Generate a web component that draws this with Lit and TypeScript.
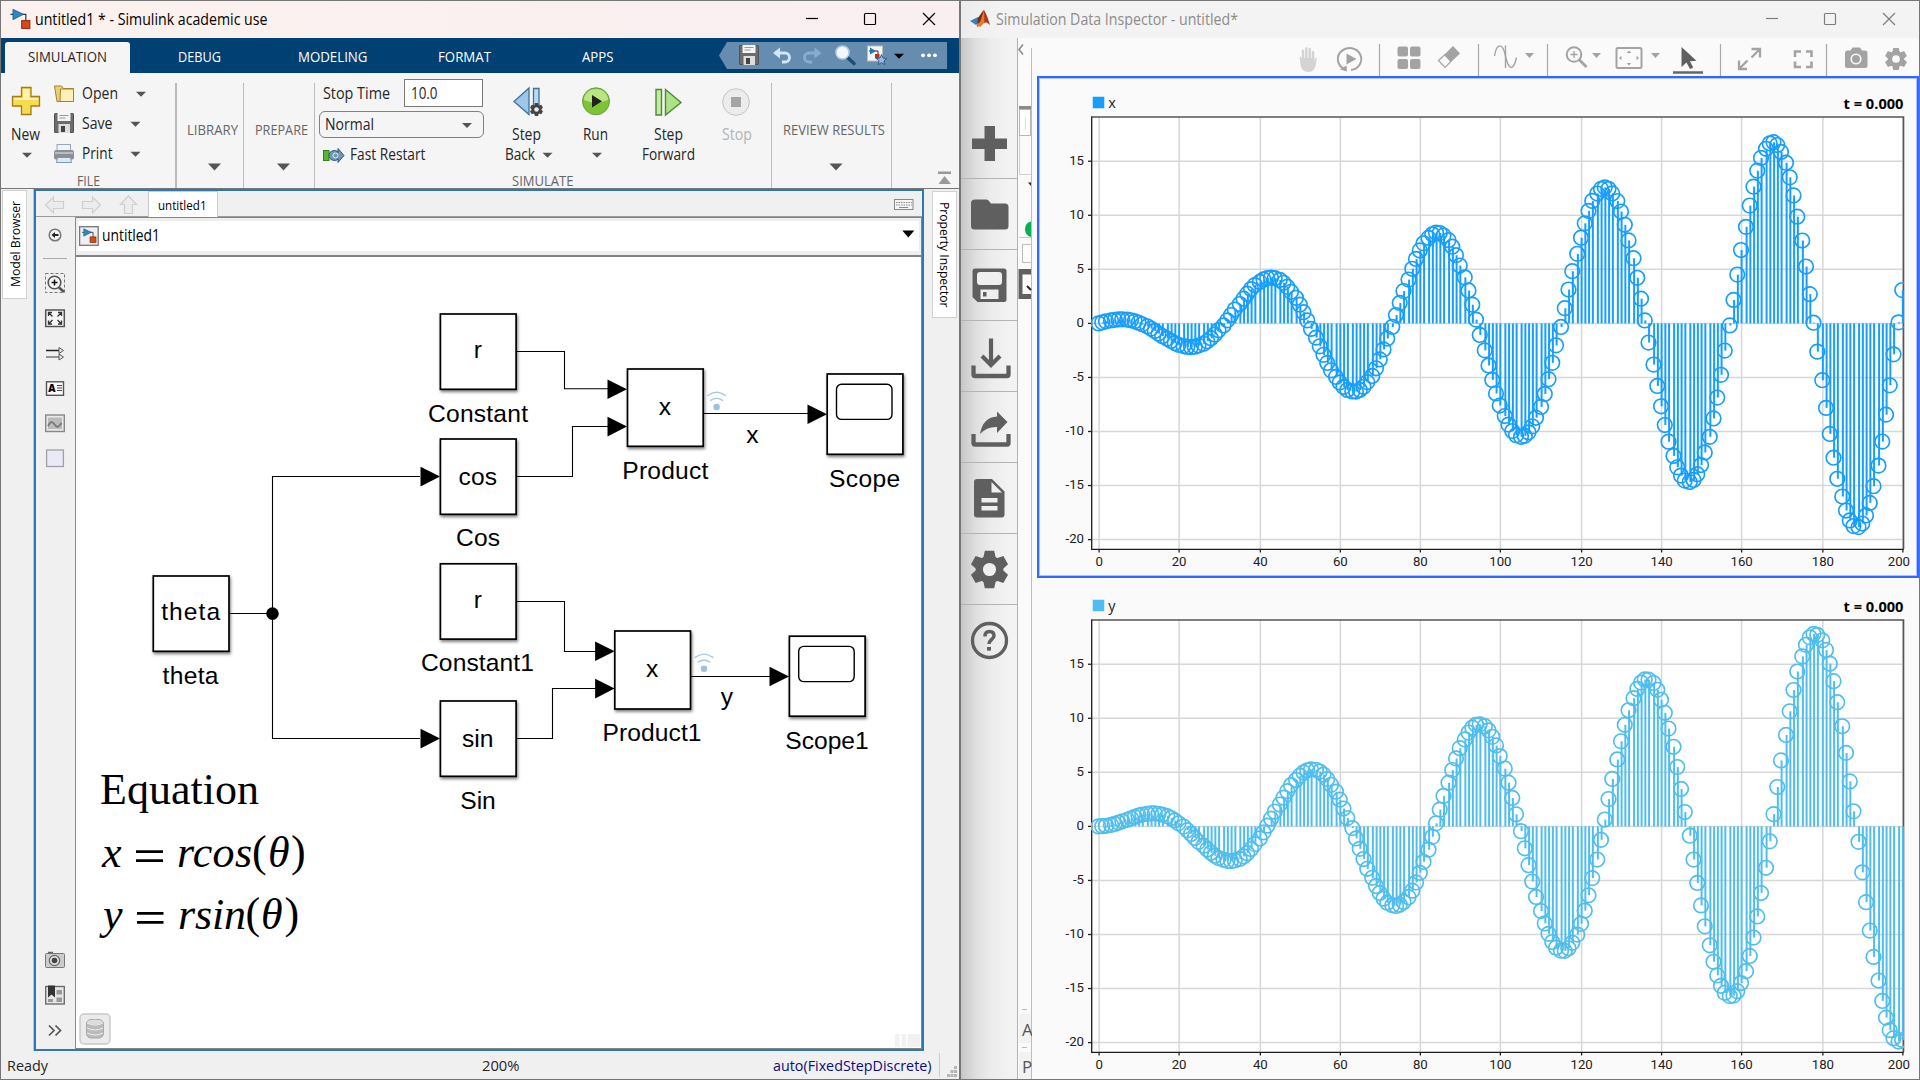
import { LitElement, html, svg, css } from "lit";
import { customElement, property } from "lit/decorators.js";

/* A slice of a bar: its viewBox is expressed in window coordinates so cells tile. */
const cell = (x: number, y: number, w: number, h: number, body: unknown) =>
  html`<svg class="cell" width=${w} height=${h} viewBox="${x} ${y} ${w} ${h}">${body}</svg>`;

/* A one-line label fitted to an exact advance width. */
const label = (text: string, w: number, size = 15.5, cls = "dark") =>
  html`<svg class="lbl ${cls}" width=${w} height="20" viewBox="0 0 ${w} 20"><text
    x="0" y="15" font-size=${size} textLength=${w} lengthAdjust="spacingAndGlyphs">${text}</text></svg>`;

const caret = (cx: number, cy: number, w = 10, h = 5, fill = "#555") =>
  svg`<path d="M${cx - w / 2} ${cy - h / 2}h${w}l${-w / 2} ${h}z" fill=${fill}/>`;

const floppy = (x: number, y: number) => svg`
  <rect x=${x} y=${y} width="20" height="20" rx="1.5" fill="#4d4d4d"/>
  <rect x=${x + 0.8} y=${y + 0.8} width="18.4" height="18.4" rx="1" fill="#6c6c6c"/>
  <rect x=${x + 3.5} y=${y} width="13" height="8" fill="#f4f4f4"/>
  <path d="M${x + 5.5} ${y + 2.5}h9M${x + 5.5} ${y + 5}h6" stroke="#999" stroke-width="1"/>
  <rect x=${x + 4.5} y=${y + 11} width="11.5" height="9" fill="#ddd"/>
  <rect x=${x + 7} y=${y + 13} width="4" height="6" fill="#444"/>`;

const modelGlyph = (x: number, y: number, k: number) => svg`
  <g transform="translate(${x} ${y}) scale(${k})">
    <path d="M0 5.5h15.8v7" fill="none" stroke="#333" stroke-width="1.2"/>
    <path d="M2.5 0.3L13.5 5.5L2.5 11z" fill="#2f86c0" stroke="#17608f" stroke-width=".8"/>
    <rect x="11.5" y="12" width="8.5" height="8" fill="#d9481c" stroke="#8d2708" stroke-width="1"/>
  </g>`;

const gear = (cx: number, cy: number, r: number, fill: string, hole: string) => svg`
  <g transform="translate(${cx} ${cy}) scale(${r / 10})">
    <g fill=${fill}>
      <circle r="7.4"/>
      ${[0, 60, 120, 180, 240, 300].map(a => svg`<path d="M-2.5-10h5l1 4.5h-7z" transform="rotate(${a})"/>`)}
    </g>
    <circle r="3.5" fill=${hole}/>
  </g>`;

const windowButtons = (x: number, color: string) => svg`
  <g fill="none" stroke=${color} stroke-width="1.2">
    <path d="M${x} 18.5h12"/>
    <rect x=${x + 58.5} y="13.5" width="11" height="11" rx="1"/>
    <path d="M${x + 117} 13l12 12m0-12l-12 12"/>
  </g>`;

/* Spiral samples: r grows by 0.1 and theta by 0.15 each step. */
const STEP_R = 0.1;
const STEP_T = 0.15;
const spiral = (fn: (a: number) => number) =>
  Array.from({ length: 201 }, (_, n) => STEP_R * n * fn(STEP_T * n));

@customElement("stem-chart")
class StemChart extends LitElement {
  @property() name = "";
  @property() color = "#169eff";
  @property({ attribute: false }) values: number[] = [];

  static styles = css`
    :host { display: block; height: 500px; overflow: hidden; }
    svg { display: block; }
    text { font-family: Roboto, "Liberation Sans", sans-serif; font-size: 13.2px; fill: #222; }
    .name { font-family: "Open Sans", "Noto Sans", sans-serif; font-size: 14.5px; }
    .time { font-family: "Open Sans", "Noto Sans", sans-serif; font-size: 14.5px; font-weight: 700; fill: #000; }
    .mid { text-anchor: middle; }
    .end { text-anchor: end; }
  `;

  render() {
    const sx = (n: number) => 62.1 + Math.round(n * 3.2144) * 1.25;
    const sy = (v: number) => 247.4 - v * 10.81;
    const yt = [15, 10, 5, 0, -5, -10, -15, -20];
    const xt = [0, 20, 40, 60, 80, 100, 120, 140, 160, 180, 200];
    return html`<svg width="882" height="500" viewBox="0 0 882 500">
      <defs><clipPath id="plot"><rect x="54" y="41" width="813" height="432"/></clipPath></defs>
      <rect x="56" y="21" width="11" height="11" fill=${this.color} stroke=${this.color} stroke-opacity=".5"/>
      <text class="name" x="71.3" y="31.7">${this.name}</text>
      <text class="time" x="806.5" y="33.3" textLength="60" lengthAdjust="spacingAndGlyphs">t = 0.000</text>
      <rect x="55" y="41" width="812" height="432.5" fill="#fff"/>
      <g stroke="#d6d8d8" stroke-width="1.5">
        ${yt.map(v => svg`<path d="M55 ${sy(v)}h812"/>`)}
        ${xt.map(n => svg`<path d="M${sx(n)} 41v432"/>`)}
      </g>
      <path d="M54.5 41h812v432" fill="none" stroke="#555" stroke-width="1.6"/>
      <path d="M54.7 40.5v432.8h812" fill="none" stroke="#1c1c1c" stroke-width="1.3"/>
      <g stroke="#222" stroke-width="1.3">
        ${yt.map(v => svg`<path d="M51 ${sy(v)}h4"/>`)}
        ${xt.map(n => svg`<path d="M${sx(n)} 473v3.5"/>`)}
      </g>
      <g clip-path="url(#plot)" fill="none" stroke=${this.color} stroke-width="1.65">
        ${this.values.map((v, n) => svg`<path stroke-width="2" d="M${sx(n)} ${sy(0)}V${sy(v)}"/><circle
          cx=${sx(n) - 0.6} cy=${sy(v)} r="7.3"/>`)}
      </g>
      ${yt.map(v => svg`<text class="end" x="47" y=${sy(v) + 3.8}>${v}</text>`)}
      ${xt.map(n => svg`<text class="mid" x=${n === 200 ? sx(n) - 4 : sx(n)} y="489.7">${n}</text>`)}
    </svg>`;
  }
}

interface Block { x: number; y: number; w: number; h: number; text?: string; tw?: number; ty?: number; name: string; nx: number; ny: number; nw: number; scope?: boolean }

@customElement("block-diagram")
class BlockDiagram extends LitElement {
  static styles = css`
    :host { display: block; flex: 1; min-height: 0; overflow: hidden; background: #fff; }
    svg { display: block; }
    text { font-family: "Liberation Sans", Arial, sans-serif; font-size: 24.6px; fill: #000; text-anchor: middle; }
    .math text, text.math { font-family: "Liberation Serif", "Times New Roman", serif; font-size: 44px; text-anchor: start; }
    .it { font-style: italic; }
    .block { fill: #fff; stroke: #000; stroke-width: 1.7; filter: drop-shadow(1.5px 2px 1.5px rgba(0, 0, 0, .5)); }
  `;

  blocks: Block[] = [
    { x: 153.3, y: 576, w: 75.7, h: 75.3, text: "theta", tw: 59, ty: 620, name: "theta", nx: 190.5, ny: 684, nw: 56 },
    { x: 440.4, y: 314, w: 75.7, h: 75.3, text: "r", tw: 8.5, ty: 357.6, name: "Constant", nx: 478, ny: 422, nw: 100 },
    { x: 440.4, y: 439, w: 75.7, h: 75.3, text: "cos", tw: 38.5, ty: 484.6, name: "Cos", nx: 478, ny: 545.5, nw: 44 },
    { x: 440.4, y: 563.8, w: 75.7, h: 75.3, text: "r", tw: 8.5, ty: 607.6, name: "Constant1", nx: 477.5, ny: 671, nw: 113 },
    { x: 440.4, y: 701, w: 75.7, h: 75.3, text: "sin", tw: 31.5, ty: 746.7, name: "Sin", nx: 478, ny: 808.7, nw: 35.5 },
    { x: 627.5, y: 369, w: 75.7, h: 77.3, text: "x", tw: 12.5, ty: 414.7, name: "Product", nx: 665.3, ny: 479.3, nw: 86 },
    { x: 614.8, y: 631, w: 75.7, h: 78, text: "x", tw: 12.5, ty: 676.6, name: "Product1", nx: 652, ny: 741, nw: 99 },
    { x: 827.2, y: 374, w: 75.7, h: 80.3, name: "Scope", nx: 864.6, ny: 486.7, nw: 71, scope: true },
    { x: 789.4, y: 636.2, w: 75.7, h: 80, name: "Scope1", nx: 827, ny: 748.7, nw: 83.5, scope: true },
  ];
  wires = [
    "M229 613.5H272.5M420 476.5H272.5V738.5H420",
    "M516 351.5H564.5V388.7H610",
    "M516 476.5H572.5V426.5H610",
    "M703 413.5H810",
    "M516 601.5H564.5V651.5H598",
    "M516 738.5H552.5V688.5H598",
    "M690 676.5H772",
  ];
  tips: [number, number][] = [[440, 476.6], [440, 738.6], [627, 389.2], [627, 426.6], [827, 414.2], [614.6, 651.2], [614.6, 688.6], [789, 676.5]];
  logged: [number, number][] = [[716.6, 407], [704, 668.8]];

  render() {
    return html`<svg width="845" height="791" viewBox="76 257 845 791">
      <g fill="none" stroke="#000" stroke-width="1.1">${this.wires.map(d => svg`<path d=${d}/>`)}</g>
      ${this.tips.map(([x, y]) => svg`<path d="M${x} ${y}l-19.5-9.8v19.6z"/>`)}
      <circle cx="272.5" cy="613.6" r="6.3"/>
      ${this.blocks.map(b => svg`
        <rect class="block" x=${b.x} y=${b.y} width=${b.w} height=${b.h}/>
        ${b.scope ? svg`<rect x=${b.x + 9.3} y=${b.y + 10.2} width="55.5" height="35.2" rx="5" fill="#fff" stroke="#000" stroke-width="1.4"/>` : ""}
        ${b.text ? svg`<text x=${b.x + b.w / 2 - 0.5} y=${b.ty!} textLength=${b.tw!}>${b.text}</text>` : ""}
        <text x=${b.nx} y=${b.ny} textLength=${b.nw}>${b.name}</text>`)}
      <text x="752.5" y="442.7">x</text>
      <text x="727" y="705">y</text>
      ${this.logged.map(([x, y]) => svg`
        <circle cx=${x} cy=${y} r="3.2" fill="#9dc1e2"/>
        <path d="M${x - 6.5} ${y - 6.3}q6.5-4.6 13 0M${x - 9.3} ${y - 11.2}q9.3-7 18.6 0" fill="none" stroke="#a6c6e4" stroke-width="1.4"/>`)}
      <text class="math" x="100" y="804" textLength="159">Equation</text>
      <g class="math">
        <text class="it" x="102" y="867" textLength="20">x</text>
        <path d="M136 851.6h27M136 860.6h27M137 913.4h26.5M137 922.4h26.5" stroke="#000" stroke-width="2.7"/>
        <text class="it" x="177" y="867" textLength="75">rcos</text>
        <text x="252" y="866">(</text><text class="it" x="268" y="867" textLength="22">θ</text><text x="291" y="866">)</text>
        <text class="it" x="103" y="929" textLength="20">y</text>
        <text class="it" x="178" y="929" textLength="68">rsin</text>
        <text x="245.5" y="928">(</text><text class="it" x="261" y="929" textLength="22">θ</text><text x="284.5" y="928">)</text>
      </g>
      <rect x="80" y="1014" width="30" height="30" rx="4" fill="#ebebeb" stroke="#c8c8c8" stroke-width="1.4"/>
      <rect x="86.5" y="1019.5" width="17" height="18.5" rx="4.5" fill="#bbb" stroke="#aaa"/>
      <path d="M87 1023q8.5 4 16 0M87 1028q8.5 4 16 0M87 1033q8.5 4 16 0" fill="none" stroke="#efefef" stroke-width="1"/>
      <ellipse cx="95" cy="1022" rx="7.5" ry="2.3" fill="#ddd"/>
      <path d="M895 1034h4.5v13h-4.5zM901.5 1034h4.5v13h-4.5zM907.5 1034h12.5v13h-12.5z" fill="#f1f1f1"/>
    </svg>`;
  }
}

@customElement("model-window")
class ModelWindow extends LitElement {
  static styles = css`
    :host { display: flex; flex-direction: column; width: 961px; height: 1080px; box-sizing: border-box;
      border: solid #767676; border-width: 1px 2px 1px 1px; background: #f0f0f0; overflow: hidden; }
    svg { display: block; flex: none; }
    text { font-family: "Open Sans", "Noto Sans", sans-serif; }
    .dark { fill: #262626; } .black { fill: #000; } .mute { fill: #666; } .dis { fill: #b3b3b3; }
    .white { fill: #fff; } .navy { fill: #0b0b80; }
    .lbl { overflow: visible; }
    .title { display: flex; align-items: center; height: 37px; background: linear-gradient(90deg, #fbf1ee, #f9eff1); flex: none; }
    .title .grow { flex: 1; }
    .tabs { display: flex; height: 35px; flex: none; background: #004073; padding-left: 4px; }
    .tab { width: 132.5px; height: 31px; margin-top: 4px; display: flex; justify-content: center; align-items: center; box-sizing: border-box; padding-bottom: 2px; }
    .tab.on { width: 125px; margin-right: 3.7px; background: #f5f5f5; border-radius: 3px 3px 0 0; }
    .tabs .grow { flex: 1; }
    .quick { display: flex; height: 27px; width: 228px; margin: 4px 12px 0 0; background: #668db0;
      clip-path: polygon(0 50%, 8px 0, 100% 0, 100% 100%, 8px 100%); }
    .strip { display: flex; height: 115px; flex: none; background: #f5f5f5; border-bottom: 1px solid #777; }
    .sec { display: flex; flex-direction: column; height: 115px; }
    .bar { width: 1px; margin-top: 10px; background: #bcbcbc; flex: none; }
    .bar.two { width: 2px; }
    .cols { display: flex; height: 98px; }
    .cap { display: flex; justify-content: center; height: 17px; }
    .file { width: 174px; } .sim { width: 456px; }
    .lib { width: 66px; } .prep { width: 70px; } .rev { width: 119px; }
    .fold { align-items: center; padding: 47px 0 0 5px; box-sizing: border-box; }
    .rows { display: flex; flex-direction: column; padding-top: 6px; }
    .row { display: flex; align-items: center; height: 30px; }
    .row .lbl { margin-left: 6px; }
    .btn { display: flex; flex-direction: column; align-items: center; }
    .b1 { width: 69px; } .b2 { width: 68px; } .b3 { width: 78px; } .b4 { width: 59px; }
    .newb { width: 51px; }
    .newb .lbl { margin-right: 2px; }
    .back { display: flex; align-items: center; margin-left: 10px; }
    .opts { width: 177px; padding: 6px 0 0 4px; box-sizing: border-box; }
    .opt { display: flex; align-items: center; height: 30px; padding-left: 3.5px; }
    .opt.low { padding-top: 1px; }
    .inp { width: 79.5px; height: 28px; box-sizing: border-box; border: 1px solid #7a7a7a; background: #fff; margin: -2px 0 0 14px; padding: 3.5px 0 0 6.5px; }
    .sel { display: flex; align-items: center; justify-content: space-between; width: 165px; height: 27px; box-sizing: border-box; margin: 2px 0 1px;
      border: 1px solid #808080; border-radius: 6px; padding: 0 4px 0 5px; }
    .opt .fast { margin-left: 3px; }
    .body { display: flex; height: 862px; flex: none; }
    .side { width: 33px; box-sizing: border-box; padding: 1px 0 0 1px; border-right: 1px solid #c0c0c0; flex: none; }
    .vtab { background: #fff; border: 1px solid #d0d0d0; box-sizing: border-box; }
    .side .vtab { width: 25px; height: 109px; }
    .right { width: 34px; padding: 2px 0 0 8px; box-sizing: border-box; flex: none; }
    .right .vtab { width: 25px; height: 127px; }
    .editor { display: flex; flex-direction: column; width: 890px; height: 862px; box-sizing: border-box; border: 2px solid #2f78b0; flex: none; }
    .docs { display: flex; height: 26px; flex: none; border-bottom: 1px solid #9a9a9a; box-sizing: border-box; }
    .doc { display: flex; justify-content: center; align-items: center; width: 70px; height: 26px; background: #fff; border: solid #ccc; border-width: 1px 1px 0; box-sizing: border-box; }
    .docs .grow { flex: 1; }
    .main { display: flex; flex: 1; min-height: 0; }
    .palette { display: flex; flex-direction: column; justify-content: space-between; width: 40px; border-right: 1px solid #8a8a92; box-sizing: border-box; flex: none; }
    .view { display: flex; flex-direction: column; flex: 1; min-width: 0; border: solid #83858c; border-width: 1px 1px 1px 0; }
    .crumb { display: flex; align-items: center; height: 37px; flex: none; background: #fff; box-sizing: border-box;
      border: solid #eee; border-width: 3px 2px 4px 2px; }
    .crumb .grow { flex: 1; }
    .rule { height: 2px; background: #80828a; flex: none; }
    .status { display: flex; align-items: center; height: 28px; padding-left: 6px; }
    .status .lbl { margin-top: 2px; }
    .s2 { margin-left: 434px; } .s3 { margin-left: 253px; }
    .sep { width: 1px; height: 24px; background: #ccc; margin: 0 5px 0 8px; }
  `;

  render() {
    return html`
      <div class="title">
        ${cell(1, 1, 34, 37, modelGlyph(10.5, 9, 0.97))}
        ${label("untitled1 * - Simulink academic use", 232.5, 15.6, "black")}
        <span class="grow"></span>
        ${cell(790, 1, 169, 37, windowButtons(806, "#000"))}
      </div>
      <div class="tabs">
        <div class="tab on">${label("SIMULATION", 79, 14.3)}</div>
        <div class="tab">${label("DEBUG", 43, 14.3, "white")}</div>
        <div class="tab">${label("MODELING", 69.5, 14.3, "white")}</div>
        <div class="tab">${label("FORMAT", 53, 14.3, "white")}</div>
        <div class="tab">${label("APPS", 31.5, 14.3, "white")}</div>
        <span class="grow"></span>
        <div class="quick">
          ${cell(719, 42, 46, 27, floppy(739, 45))}
          ${cell(765, 42, 32, 27, svg`<path d="M775 53h10a4.5 4.5 0 0 1 0 9h-3" fill="none" stroke="#d3e6f8" stroke-width="2.8"/><path d="M773 53l7-5.500v11z" fill="#d3e6f8"/>`)}
          ${cell(797, 42, 32, 27, svg`<g opacity=".75"><path d="M819 53h-10a4.5 4.5 0 0 0 0 9h3" fill="none" stroke="#94b9da" stroke-width="2.8"/><path d="M821.5 53l-7-5.500v11z" fill="#94b9da"/></g>`)}
          ${cell(829, 42, 32, 27, svg`<path d="M847.5 57.5l6.500 6" stroke="#1c4c78" stroke-width="3.5" stroke-linecap="round"/><circle cx="842.5" cy="52.5" r="6.5" fill="#f2f8fc" stroke="#b8cfe2" stroke-width="1.6"/>`)}
          ${cell(861, 42, 28, 27, svg`<rect x="867.5" y="46" width="15" height="15" fill="#f4f4f4" stroke="#bbb"/><path d="M869 51h9v5" fill="none" stroke="#333"/><path d="M870 47.500l6 3.500-6 3.500z" fill="#2478b4"/><rect x="875" y="54" width="4.5" height="4.5" fill="#b8341c"/><path d="M881.5 54.500l1.500 3.600 3.900.3-3 2.500 1 3.800-3.400-2-3.300 2 .9-3.800-3-2.500 3.900-.3z" fill="#9bbcda" stroke="#335f8a"/>`)}
          ${cell(889, 42, 58, 27, svg`${caret(899, 56.3, 10, 5, "#000")}<g fill="#fff"><circle cx="923" cy="55.3" r="1.9"/><circle cx="929" cy="55.3" r="1.9"/><circle cx="935" cy="55.3" r="1.9"/></g>`)}
        </div>
      </div>
      <div class="strip">
        <div class="sec file">
          <div class="cols">
            <div class="btn newb">
              ${cell(1, 73, 51, 52, svg`<path d="M21.5 87.500h9.500v9h8.500v9.500H31v8.500h-9.500V106H12.500v-9.500h9z" fill="#f7dc52" stroke="#a87a14" stroke-width="1.300"/><path d="M23 89h6.500v9h8.500v2H14v-2h9z" fill="#fdf3b0"/>`)}
              ${label("New", 29)}
              ${cell(1, 145, 51, 20, caret(27, 155.3))}
            </div>
            <div class="rows">
              <div class="row">${cell(52, 79, 24, 30, svg`<path d="M54.5 86h7l2 2.500h10v13H57z" fill="#e8cf7c" stroke="#a2822e"/><path d="M60.5 89h13v12.500h-13.500z" fill="#fbf0b8" stroke="#a2822e"/>`)}${label("Open", 36)}${cell(118, 79, 40, 30, caret(141, 94.3))}</div>
              <div class="row">${cell(52, 109, 24, 30, floppy(54, 113))}${label("Save", 30.5)}${cell(112, 109, 40, 30, caret(134.5, 124.3))}</div>
              <div class="row">${cell(52, 139, 24, 30, svg`<rect x="57" y="144.500" width="13.500" height="9" fill="#eef3f8" stroke="#9aa6b4"/><rect x="54" y="150" width="20" height="9.500" rx="2" fill="#8b8f96"/><path d="M55 153h18" stroke="#c9ccd0" stroke-width="1.500"/><path d="M57.5 157.500h13l1 5h-15z" fill="#dce9f5" stroke="#7898b4"/>`)}${label("Print", 30.5)}${cell(112, 139, 40, 30, caret(134.5, 154.3))}</div>
            </div>
          </div>
          <div class="cap">${label("FILE", 23, 14, "mute")}</div>
        </div>
        <div class="bar two"></div>
        <div class="sec lib fold">${label("LIBRARY", 51, 14, "mute")}${cell(182.5, 140, 60, 40, caret(214, 167, 13, 7))}</div>
        <div class="bar"></div>
        <div class="sec prep fold">${label("PREPARE", 53, 14, "mute")}${cell(251.5, 140, 60, 40, caret(283, 167, 13, 7))}</div>
        <div class="bar"></div>
        <div class="sec sim">
          <div class="cols">
            <div class="opts">
              <div class="opt">${label("Stop Time", 67)}<div class="inp">${label("10.0", 26.5)}</div></div>
              <div class="sel">${label("Normal", 49)}${cell(450, 111, 29, 24, caret(467, 123.5, 10, 5))}</div>
              <div class="opt low">${cell(319, 139, 24, 30, svg`<rect x="319.5" y="149.500" width="5.500" height="10" fill="#5cb531" stroke="#32801a"/><path d="M325 154.500c0-6 9-6 9-3v-4l6 7-6 7v-4c0 3-9 3-9-3z" fill="#7396b3" stroke="#31587b"/><circle cx="331.5" cy="154.500" r="2.500" fill="none" stroke="#dfeaf3"/>`)}<div class="fast">${label("Fast Restart", 75.5)}</div></div>
            </div>
            <div class="btn b1">
              ${cell(492, 73, 69, 52, svg`<path d="M529 88v26.500L514 101.500z" fill="#9cc7e8" stroke="#3f7196" stroke-width="1.300"/><path d="M533.5 88.500h5.500v21h-5.500z" fill="#b9dbf2" stroke="#3f7196" stroke-width="1.300"/>${gear(536.5, 109.5, 6.5, "#444", "#eee")}`)}
              ${label("Step", 29)}
              <div class="back">${label("Back", 30)}${cell(534, 145, 24, 20, caret(546.5, 155.3))}</div>
            </div>
            <div class="btn b2">
              ${cell(561, 73, 68, 52, svg`<circle cx="596" cy="101.300" r="13.500" fill="#7cc432" stroke="#6a9b48" stroke-width="1"/><path d="M584 100a12 11 0 0 1 24 0q-12 5-24 0z" fill="#b9e583"/><path d="M592 95l10 6.300-10 6.300z" fill="#222"/>`)}
              ${label("Run", 25)}
              ${cell(561, 145, 68, 20, caret(597, 155.3))}
            </div>
            <div class="btn b3">
              ${cell(629, 73, 78, 52, svg`<path d="M656 89.500h5.500v25.500h-5.500z" fill="#c4eba2" stroke="#4b8b33" stroke-width="1.400"/><path d="M665.5 89.500v25.500l15.500-12.500z" fill="#aee287" stroke="#4b8b33" stroke-width="1.400"/>`)}
              ${label("Step", 29)}${label("Forward", 53)}
            </div>
            <div class="btn b4">
              ${cell(707, 73, 59, 52, svg`<circle cx="736" cy="102" r="13.300" fill="#ececec" stroke="#c4c4c4"/><rect x="731" y="97" width="10" height="10" fill="#a5a5a5"/>`)}
              ${label("Stop", 30, 15.5, "dis")}
            </div>
          </div>
          <div class="cap">${label("SIMULATE", 61.5, 14, "mute")}</div>
        </div>
        <div class="bar"></div>
        <div class="sec rev fold">${label("REVIEW RESULTS", 102, 14, "mute")}${cell(804, 140, 60, 40, caret(836, 167, 13, 7))}</div>
        <div class="bar"></div>
        ${cell(892, 73, 67, 115, svg`<path d="M938 171.500h13v2.500h-13zM938.5 184l6-8 6.500 8z" fill="#999"/>`)}
      </div>
      <div class="body">
        <div class="side"><div class="vtab">
          <svg width="23" height="107" viewBox="0 0 23 107"><text transform="translate(16.500 96) rotate(-90)" font-size="13" textLength="86" lengthAdjust="spacingAndGlyphs">Model Browser</text></svg>
        </div></div>
        <div class="editor">
          <div class="docs">
            ${cell(36, 191, 111.5, 26, svg`<g fill="#ececec" stroke="#cfcfcf" stroke-width="1.200"><path d="M45.5 205l8-8v4.500h10v7h-10v4.500z"/><path d="M100.5 205l-8-8v4.500h-10v7h10v4.500z"/><path d="M128.5 196l8 8.500h-4v9h-8v-9h-4z"/></g>`)}
            <div class="doc">${label("untitled1", 48.5, 13, "black")}</div>
            <span class="grow"></span>
            ${cell(885, 191, 37, 26, svg`<rect x="894.5" y="199.500" width="18.500" height="10" fill="#f4f4f4" stroke="#888"/><path d="M896 202.500h16M896 205h16" stroke="#888" stroke-width="1" stroke-dasharray="1.500 1"/><path d="M899 207.500h9" stroke="#888"/>`)}
          </div>
          <div class="main">
            <div class="palette">
              ${cell(36, 217, 39, 260, svg`
                <circle cx="55" cy="235" r="5.800" fill="#f2f2f2" stroke="#777" stroke-width="1.500"/><path d="M51.5 235l3.500-3v2h3.500v2H55v2z" fill="#222"/>
                <path d="M43 258.500h24" stroke="#aaa"/>
                <rect x="45.500" y="273.500" width="19" height="19" fill="none" stroke="#777" stroke-dasharray="3 2"/>
                <circle cx="54.500" cy="282.500" r="6.300" fill="#f6f6f6" stroke="#555" stroke-width="1.600"/><path d="M51.5 282.500h6m-3-3v6" stroke="#111" stroke-width="1.500"/><path d="M59 287.500l5 4.500" stroke="#555" stroke-width="2.500"/>
                <rect x="45.700" y="310" width="18.600" height="16.500" fill="#f5f5f5" stroke="#555" stroke-width="1.500"/>
                <path d="M48.500 316v-3.500h3.500m-3 .5l3.500 3.500M61.500 316v-3.500H58m3 .5l-3.500 3.500M48.500 320.500v3.500h3.500m-3-.5l3.500-3.500M61.500 320.500v3.500H58m3-.5l-3.500-3.500" fill="none" stroke="#333" stroke-width="1.300"/>
                <path d="M46 350.500h14" stroke="#222" stroke-width="1.500"/><path d="M46 357h14" stroke="#777" stroke-width="1.500"/><path d="M59 347.500l4.500 3-4.500 3zM59 354l4.500 3-4.500 3z" fill="#eee" stroke="#555"/>
                <rect x="46.500" y="381.800" width="17" height="13.500" fill="#fafafa" stroke="#555" stroke-width="1.400"/><text x="48.300" y="392" font-size="10" font-weight="800">A</text><path d="M57 385.500h5M57 388h5M57 390.500h5" stroke="#444"/>
                <rect x="45.700" y="415" width="18.600" height="16.500" fill="#e8e8e8" stroke="#888" stroke-width="1.400"/><rect x="48" y="417.500" width="14" height="11.500" fill="#bbb"/><path d="M48 426c3-6 5-4 7-1s4 2 6.500-2" fill="none" stroke="#777" stroke-width="1.800"/>
                <rect x="46.600" y="450" width="16.800" height="16.500" fill="#e9e9f7" stroke="#a0a0a6" stroke-width="1.300"/>`)}
              ${cell(36, 946, 39, 103, svg`
                <rect x="45.500" y="953.500" width="19" height="14" rx="1" fill="#ccc" stroke="#777"/><path d="M48 952.500h5" stroke="#666" stroke-width="1.500"/><circle cx="54.500" cy="960.500" r="5.200" fill="#ddd" stroke="#666" stroke-width="1.200"/><circle cx="54.500" cy="960.500" r="2.800" fill="#444"/>
                <rect x="45.700" y="986.500" width="18.600" height="17.500" fill="#e6e6e6" stroke="#666" stroke-width="1.300"/><path d="M48 985.500h7v12l-3.500-3-3.500 3z" fill="#333"/><path d="M56.500 990h5.500v4.500h-5.500zM56.500 997.500h5.500v4.500h-5.500zM48 999h5v3h-5z" fill="#999"/>
                <path d="M49 1025.500l5 5-5 5M55.500 1025.500l5 5-5 5" fill="none" stroke="#555" stroke-width="1.700"/>`)}
            </div>
            <div class="view">
              <div class="crumb">
                ${cell(78, 221, 24, 30, svg`<rect x="79.600" y="226.700" width="18.600" height="18.600" fill="#efefef" stroke="#777" stroke-width="1.300"/>${modelGlyph(82, 228.5, 0.7)}`)}
                ${label("untitled1", 58, 15.5, "black")}
                <span class="grow"></span>
                ${cell(895, 221, 24, 30, caret(908.3, 234, 12, 7, "#000"))}
              </div>
              <div class="rule"></div>
              <block-diagram></block-diagram>
            </div>
          </div>
        </div>
        <div class="right"><div class="vtab">
          <svg width="23" height="125" viewBox="0 0 23 125"><text transform="translate(6.500 10) rotate(90)" font-size="13" textLength="105.500" lengthAdjust="spacingAndGlyphs">Property Inspector</text></svg>
        </div></div>
      </div>
      <div class="status">
        ${label("Ready", 41, 15)}
        <div class="s2">${label("200%", 37.5, 15)}</div>
        <div class="s3">${label("auto(FixedStepDiscrete)", 158.5, 15, "navy")}</div>
        <div class="sep"></div>
        ${cell(944, 1051, 14, 28, svg`<g fill="#b5b5b5"><path d="M953 1066h3v3h-3zM949.500 1070h3v3h-3zM953 1070h3v3h-3zM946 1074h3v3h-3zM949.500 1074h3v3h-3zM953 1074h3v3h-3z"/></g>`)}
      </div>`;
  }
}

@customElement("inspector-window")
class InspectorWindow extends LitElement {
  static styles = css`
    :host { display: flex; flex-direction: column; width: 959px; height: 1080px; box-sizing: border-box;
      border: solid #767676; border-width: 1px 1px 1px 0; background: #fafafa; overflow: hidden; }
    svg { display: block; flex: none; }
    text { font-family: "Open Sans", "Noto Sans", sans-serif; }
    .gray { fill: #8c8c8c; }
    .lbl { overflow: visible; }
    .title { display: flex; align-items: center; height: 37px; flex: none; background: linear-gradient(90deg, #ececec, #f3f3f3 40px); }
    .grow { flex: 1; }
    .body { display: flex; flex: 1; min-height: 0; }
    .rail { display: flex; flex-direction: column; width: 57px; box-sizing: border-box; border-right: 1px solid #b2b2b2; flex: none;
      background: linear-gradient(90deg, #c6c6c6, #dedede 14px, #ececec 30px, #f3f3f3 50px); padding-top: 70px; }
    .item { height: 71px; box-sizing: border-box; border-bottom: 1px solid #b4b4b4; flex: none; }
    .item:last-child { border: 0; }
    .work { display: flex; flex-direction: column; width: 887px; flex: none; }
    .bar { display: flex; height: 38px; flex: none; padding-left: 258px; }
    .charts { display: flex; flex-direction: column; gap: 1px; padding-left: 5px; }
    .pane { width: 882px; box-sizing: border-box; overflow: hidden; }
    .first { height: 502px; box-shadow: inset 0 0 0 2px #3467ff, inset 0 0 0 3px #a9c1ff; }
    .second { height: 500px; }
  `;

  xs = spiral(Math.cos);
  ys = spiral(Math.sin);

  rail() {
    const k = "#5f5f5f";
    const tray = (y: number) => svg`<path d="M973.500 ${y - 10}v9q0 1.500 1.500 1.500h32q1.500 0 1.500-1.500v-9" fill="none" stroke=${k} stroke-width="4.300"/>`;
    const art = [
      svg`<path d="M984.500 126h10.500v12.500h12v10.500h-12v12h-10.500v-12H972v-10.500h12.500z" fill=${k}/>`,
      svg`<path d="M975 199.500h11.500q1.500 0 2.500 1.500l2 2.500h14q3.500 0 3.500 3.500v19q0 3.500-3.500 3.500h-30.500q-3.500 0-3.500-3.500v-23q0-3.500 4-3.500z" fill=${k}/>`,
      svg`<path d="M975 268.500h29q2.500 0 2.500 2.500v28.500q0 2.500-2.500 2.500h-26.500l-5-5v-26q0-2.500 2.500-2.500z" fill=${k}/><rect x="977" y="272" width="25" height="13" rx="3" fill="#efefef"/><path d="M980.500 289.500h18v9.500h-18z" fill="#efefef"/><path d="M983 292h3.500v4.500H983z" fill=${k}/>`,
      svg`${tray(375.5)}<path d="M991 338.500v26M982 356l9 9 9-9" fill="none" stroke=${k} stroke-width="4.200"/>`,
      svg`${tray(444)}<path d="M980 434q3-17 17-17.500v-5l10.500 10.500-10.500 11v-6q-10-.5-17 7z" fill=${k}/>`,
      svg`<path d="M977 479h15l12.500 12.500v23q0 3-3 3H977q-3 0-3-3V482q0-3 3-3z" fill=${k}/><path d="M991.500 482l10.500 10.500h-10.500zM981.500 498h16v4.500h-16zM981.500 506h16v4.500h-16z" fill="#efefef"/>`,
      gear(989.5, 569.5, 18.7, k, "#efefef"),
      svg`<circle cx="989.500" cy="640.500" r="17" fill="none" stroke=${k} stroke-width="3.300"/><path d="M985 636.500q0-5 4.500-5t4.500 4.300c0 3.500-5 3.800-5 8.200" fill="none" stroke=${k} stroke-width="3.400"/><path d="M987 647h4v3.600h-4z" fill=${k}/>`,
    ];
    return art.map((a, i) => html`<div class="item">${cell(961, 108 + 71 * i, 56, 70, a)}</div>`);
  }

  toolbar() {
    const g = "#a3a3a3";
    const rule = (x: number) => svg`<path d="M${x} 44v33" stroke="#a8a8a8" stroke-width="1.200"/>`;
    return html`
      ${cell(1290, 38, 40, 38, svg`<path d="M1303 60V51M1306.300 59V48.500M1309.700 59V49M1313 60V52" stroke="#d4d4d4" stroke-width="2.500" stroke-linecap="round"/><path d="M1301.500 58h13v4l1-4q1.500-2 1.200 1l-1.200 7q-1.500 6-7.500 6-6.500 0-7.500-8l-1-7q1.500-1.500 2 1z" fill="#d4d4d4"/>`)}
      ${cell(1330, 38, 56, 38, svg`<path d="M1343.500 68.500a11.700 11 0 1 1 7.500 1.500" fill="none" stroke=${g} stroke-width="2"/><path d="M1340 69.500l6.500-4 .5 6z" fill=${g}/><path d="M1346.500 53.500l10 5.500-10 5.500z" fill=${g}/>${rule(1379.5)}`)}
      ${cell(1386, 38, 46, 38, svg`<g fill=${g}><rect x="1397.500" y="46.500" width="10.500" height="10" rx="2"/><rect x="1410" y="46.500" width="10.500" height="10" rx="2"/><rect x="1397.500" y="59" width="10.500" height="10" rx="2"/><rect x="1410" y="59" width="10.500" height="10" rx="2"/></g>`)}
      ${cell(1432, 38, 56, 38, svg`<path d="M1438.500 60.500l6.500-6 6 7-6 6z" fill="#fafafa" stroke=${g} stroke-width="1.200"/><path d="M1444 55l9-9 7 7.500-9 8.500z" fill=${g}/>${rule(1478.5)}`)}
      ${cell(1488, 38, 66, 38, svg`<path d="M1494.500 56c2-13 8-14 11 0s8 16 11 1.500" fill="none" stroke=${g} stroke-width="1.400"/><path d="M1505.500 45.500v22.500" stroke=${g} stroke-width="1.400"/>${caret(1529.5, 55.5, 9, 5, g)}${rule(1547.5)}`)}
      ${cell(1554, 38, 56, 38, svg`<circle cx="1574" cy="54.500" r="7.300" fill="none" stroke=${g} stroke-width="2"/><path d="M1570.500 54.500h7m-3.500-3.500v7" stroke=${g} stroke-width="1.300"/><path d="M1579.500 60l7 7" stroke=${g} stroke-width="2.800"/>${caret(1596.5, 55.5, 9, 5, g)}`)}
      ${cell(1610, 38, 56, 38, svg`<rect x="1616.500" y="48" width="25" height="20" rx="1.500" fill="none" stroke=${g} stroke-width="2"/><path d="M1629 50.500l2.300 2.500h-4.600zM1629 65.500l2.300-2.500h-4.600zM1619 58l2.500-2.300v4.600zM1639 58l-2.500-2.300v4.600z" fill=${g}/>${caret(1655.5, 55.5, 9, 5, g)}`)}
      ${cell(1666, 38, 64, 38, svg`<path d="M1681.500 47v20l5-4.500 3.500 6.500 3.200-1.500-3.300-6.300 6.600-.4z" fill="#5f5f5f"/><path d="M1673 72.500h30" stroke="#666" stroke-width="2.500"/>${rule(1720.5)}`)}
      ${cell(1730, 38, 52, 38, svg`<g fill="none" stroke=${g} stroke-width="2.300"><path d="M1751.500 49h8.500v8.500M1751.500 57.500l8-8M1747 69h-8v-8.500M1747.500 60.500l-8 8"/></g>`)}
      ${cell(1782, 38, 52, 38, svg`<path d="M1801 51.500h-6v5.500M1806 51.500h5.500v5.500M1801 67h-6v-5.500M1806 67h5.500v-5.500" fill="none" stroke=${g} stroke-width="2.600"/>${rule(1826.5)}`)}
      ${cell(1834, 38, 44, 38, svg`<path d="M1847.500 50.500h3l2-3h7.500l2 3h3q2.500 0 2.500 2.500v12.500q0 2.500-2.500 2.500h-17.500q-2.500 0-2.500-2.500V53q0-2.500 2.500-2.500z" fill=${g}/><circle cx="1856" cy="59" r="4.800" fill="none" stroke="#fafafa" stroke-width="1.600"/>`)}
      ${cell(1878, 38, 40, 38, gear(1896, 59, 11, g, "#fafafa"))}`;
  }

  render() {
    return html`
      <div class="title">
        ${cell(961, 1, 34.5, 37, svg`<path d="M970 21l8-4 3.500 3-5.500 5z" fill="#3b7fae"/><path d="M978 18l5.500-8 2 5-5.500 10-3 2z" fill="#702c24"/><path d="M976 25l4-3 4-12q2 5 2.500 12l-3 1.500-3.500 3.500z" fill="#e8792b"/><path d="M984 10q3 5 6 15l-4-3-1.500 1.500z" fill="#b3301c"/>`)}
        ${label("Simulation Data Inspector - untitled*", 242, 15.6, "gray")}
        <span class="grow"></span>
        ${cell(1750, 1, 169, 37, windowButtons(1766, "#7d7d7d"))}
      </div>
      <div class="body">
        <div class="rail">${this.rail()}</div>
        ${cell(1018, 38, 14, 1041, svg`
          <path d="M1023 44.500l-4 5 4 5" fill="none" stroke="#888" stroke-width="1.500"/>
          <path d="M1031.500 48V1079" stroke="#bdbdbd"/>
          <path d="M1019 107.500h12" stroke="#8a8a8a" stroke-width="3"/>
          <rect x="1019.500" y="109.500" width="11" height="26" fill="#fff" stroke="#b5b5b5"/><path d="M1025.500 118v11" stroke="#ddd"/>
          <path d="M1019.500 136v38.500h11.500" fill="none" stroke="#d0d0d0"/>
          <path d="M1028 182.500h3v3.500z" fill="#222"/>
          <path d="M1031 221.500a8 8 0 0 0 0 15.500z" fill="#0ab050"/>
          <path d="M1019 237.500h12" stroke="#ccc"/>
          <path d="M1031 244.500h-8.500v18h8.500" fill="#fff" stroke="#bbb"/>
          <path d="M1018.500 269h12.500v30h-12.500z" fill="#606060"/><path d="M1022.500 274.500h8.500v19.500h-8.500z" fill="#fff"/>
          <path d="M1027 286l4 4" stroke="#222" stroke-width="2"/>
          <path d="M1022 1009.500h5M1022 1047.500h5" stroke="#bbb"/>
          <path d="M1019 1014h12v29h-12zM1019 1052h12v27h-12z" fill="#f2f2f2"/>
          <text x="1022" y="1035.500" font-size="17" fill="#555">A</text><text x="1022" y="1073" font-size="17" fill="#555">P</text>`)}
        <div class="work">
          <div class="bar">${this.toolbar()}</div>
          <div class="charts">
            <div class="pane first"><stem-chart name="x" color="#169eff" .values=${this.xs}></stem-chart></div>
            <div class="pane second"><stem-chart name="y" color="#4fbeee" .values=${this.ys}></stem-chart></div>
          </div>
        </div>
      </div>`;
  }
}

@customElement("app-root")
class AppRoot extends LitElement {
  static styles = css`
    :host { display: flex; width: 1920px; height: 1080px; overflow: hidden; background: #fafafa; }
  `;
  render() {
    return html`<model-window></model-window><inspector-window></inspector-window>`;
  }
}
